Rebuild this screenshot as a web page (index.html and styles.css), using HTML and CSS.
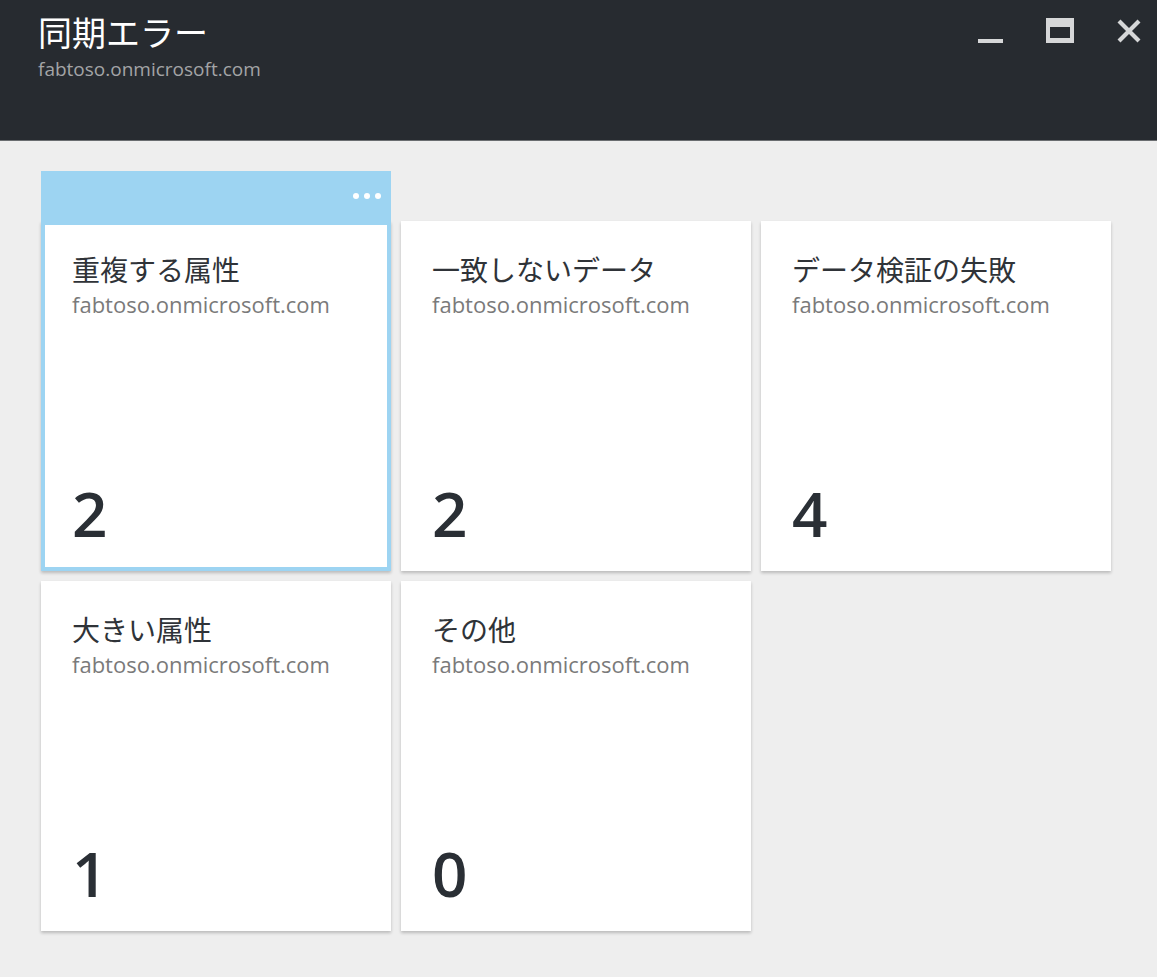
FILE: index.html
```html
<!DOCTYPE html>
<html lang="ja">
<head>
<meta charset="utf-8">
<title>同期エラー</title>
<link rel="stylesheet" href="styles.css">
</head>
<body>
<header class="blade-header">
  <div class="titles">
    <h1 class="blade-title">同期エラー</h1>
    <div class="blade-subtitle">fabtoso.onmicrosoft.com</div>
  </div>
  <div class="window-controls">
    <svg class="ctl" width="25" height="25" viewBox="0 0 25 25"><rect x="0" y="21" width="25" height="4" fill="#d6d7d8"/></svg>
    <svg class="ctl" width="28" height="25" viewBox="0 0 28 25"><path fill="#d6d7d8" fill-rule="evenodd" d="M0 0H28V25H0Z M4 9V20H24V9Z"/></svg>
    <svg class="ctl" width="24" height="25" viewBox="0 0 24 25"><path d="M2 3L22 23M22 3L2 23" stroke="#d6d7d8" stroke-width="4.2" fill="none"/></svg>
  </div>
</header>
<main class="content">
  <div class="tiles">
    <section class="tile selected">
      <div class="tile-bar"><span class="dots"><i></i><i></i><i></i></span></div>
      <div class="tile-title">重複する属性</div>
      <div class="tile-sub">fabtoso.onmicrosoft.com</div>
      <div class="tile-count">2</div>
    </section>
    <section class="tile">
      <div class="tile-title">一致しないデータ</div>
      <div class="tile-sub">fabtoso.onmicrosoft.com</div>
      <div class="tile-count">2</div>
    </section>
    <section class="tile">
      <div class="tile-title">データ検証の失敗</div>
      <div class="tile-sub">fabtoso.onmicrosoft.com</div>
      <div class="tile-count">4</div>
    </section>
    <section class="tile">
      <div class="tile-title">大きい属性</div>
      <div class="tile-sub">fabtoso.onmicrosoft.com</div>
      <div class="tile-count">1</div>
    </section>
    <section class="tile">
      <div class="tile-title">その他</div>
      <div class="tile-sub">fabtoso.onmicrosoft.com</div>
      <div class="tile-count">0</div>
    </section>
  </div>
</main>
</body>
</html>
```
FILE: styles.css
```css
* { box-sizing: border-box; }
html, body { margin: 0; padding: 0; }
body {
  background: #eeeeee;
  font-family: "Open Sans", "Noto Sans CJK JP", sans-serif;
  width: 1157px;
  height: 977px;
  overflow: hidden;
}
.blade-header {
  height: 141px;
  background: #272b30;
  border-bottom: 1px solid #6a6d70;
  display: flex;
  justify-content: space-between;
  padding: 0 0 0 38px;
}
.titles { padding-top: 10px; }
.blade-title {
  margin: 0;
  font-family: "Noto Sans CJK JP", sans-serif;
  font-weight: 400;
  font-size: 34px;
  line-height: 44px;
  color: #ffffff;
}
.blade-subtitle {
  font-size: 19px;
  line-height: 31px;
  color: #a3a4a6;
}
.window-controls {
  display: flex;
  align-items: flex-start;
  gap: 43px;
  padding: 18px 16px 0 0;
}
.ctl { display: block; }
.content { padding: 80px 0 0 41px; }
.tiles {
  display: grid;
  grid-template-columns: repeat(3, 350px);
  grid-auto-rows: 350px;
  gap: 10px;
}
.tile {
  position: relative;
  background: #ffffff;
  border: 4px solid #ffffff;
  box-shadow: 0 2px 3px rgba(0, 0, 0, 0.22);
  padding: 26px 10px 0 27px;
  display: flex;
  flex-direction: column;
}
.tile.selected { border-color: #9dd4f2; }
.tile-bar {
  position: absolute;
  left: -4px;
  right: -4px;
  top: -54px;
  height: 50px;
  background: #9dd4f2;
  display: flex;
  justify-content: flex-end;
  align-items: flex-start;
  padding: 22px 10px 0 0;
}
.dots { display: flex; gap: 5px; }
.dots i {
  display: block;
  width: 6px;
  height: 6px;
  border-radius: 50%;
  background: #ffffff;
}
.tile-title {
  font-family: "Noto Sans CJK JP", sans-serif;
  font-size: 28px;
  line-height: 36px;
  color: #2f3338;
}
.tile-sub {
  font-size: 22px;
  line-height: 34px;
  color: #7a7a7a;
}
.tile-count {
  margin-top: auto;
  font-size: 62px;
  font-weight: 600;
  line-height: 70px;
  color: #2a2f35;
  padding-bottom: 19px;
}
```
